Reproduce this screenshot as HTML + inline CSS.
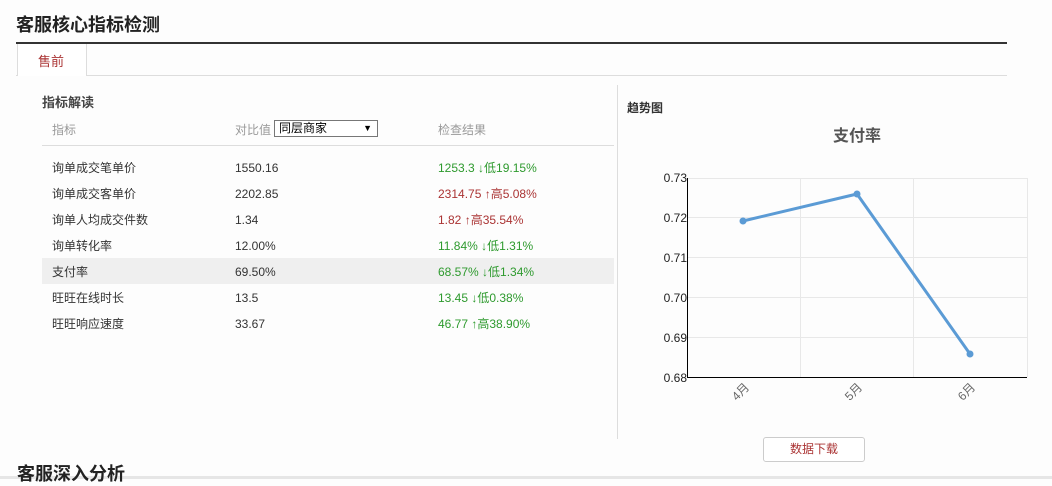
<!DOCTYPE html>
<html><head><meta charset="utf-8"><style>
*{margin:0;padding:0;box-sizing:border-box}
body{width:1052px;height:479px;overflow:hidden;background:#fdfdfd;font-family:"Liberation Sans","Noto Sans CJK SC",sans-serif;position:relative;color:#333}
.a{position:absolute;white-space:nowrap}
.h1{font-size:18px;font-weight:bold;color:#222}
.row{position:absolute;left:42px;width:572px;height:26px;font-size:12px;line-height:26px;color:#333}
.row span{position:absolute;top:1px}
.g{color:#2e9a2e}.r{color:#a33}
</style></head><body>
<div class="a" style="left:0;top:476px;width:1052px;height:3px;background:#e6e6e6"></div>
<div class="a h1" style="left:16px;top:11px">客服核心指标检测</div>
<div class="a" style="left:16px;top:42px;width:991px;height:2px;background:#333"></div>
<div class="a" style="left:16px;top:75px;width:991px;height:1px;background:#ddd"></div>
<div class="a" style="left:17px;top:44px;width:70px;height:32px;background:#fff;border:1px solid #ddd;border-top:none;border-bottom:none"></div>
<div class="a" style="left:38px;top:51px;font-size:13px;color:#a33">售前</div>
<div class="a" style="left:42px;top:92px;font-size:13px;font-weight:bold;color:#444">指标解读</div>
<div class="a" style="left:52px;top:121px;font-size:12px;color:#999">指标</div>
<div class="a" style="left:235px;top:121px;font-size:12px;color:#999">对比值</div>
<div class="a" style="left:274px;top:120px;width:104px;height:17px;border:1px solid #777;background:#fff;font-size:12px;line-height:15px;padding-left:4px;color:#000">同层商家<span style="position:absolute;right:5px;font-size:9px">▼</span></div>
<div class="a" style="left:438px;top:121px;font-size:12px;color:#999">检查结果</div>
<div class="a" style="left:42px;top:145px;width:572px;height:1px;background:#ddd"></div>
<div class="row" style="top:154px"><span style="left:10px">询单成交笔单价</span><span style="left:193px">1550.16</span><span class="g" style="left:396px">1253.3 ↓低19.15%</span></div>
<div class="row" style="top:180px"><span style="left:10px">询单成交客单价</span><span style="left:193px">2202.85</span><span class="r" style="left:396px">2314.75 ↑高5.08%</span></div>
<div class="row" style="top:206px"><span style="left:10px">询单人均成交件数</span><span style="left:193px">1.34</span><span class="r" style="left:396px">1.82 ↑高35.54%</span></div>
<div class="row" style="top:232px"><span style="left:10px">询单转化率</span><span style="left:193px">12.00%</span><span class="g" style="left:396px">11.84% ↓低1.31%</span></div>
<div class="row" style="top:258px;background:#efefef"><span style="left:10px">支付率</span><span style="left:193px">69.50%</span><span class="g" style="left:396px">68.57% ↓低1.34%</span></div>
<div class="row" style="top:284px"><span style="left:10px">旺旺在线时长</span><span style="left:193px">13.5</span><span class="g" style="left:396px">13.45 ↓低0.38%</span></div>
<div class="row" style="top:310px"><span style="left:10px">旺旺响应速度</span><span style="left:193px">33.67</span><span class="g" style="left:396px">46.77 ↑高38.90%</span></div>
<div class="a" style="left:617px;top:85px;width:1px;height:354px;background:#ddd"></div>
<div class="a" style="left:627px;top:99px;font-size:12px;font-weight:bold;color:#333">趋势图</div>
<svg class="a" style="left:0;top:0" width="1052" height="479">
<text x="857" y="141" font-size="16" font-weight="bold" fill="#555" text-anchor="middle" font-family="Liberation Sans,Noto Sans CJK SC,sans-serif">支付率</text>
<g stroke="#e8e8e8" stroke-width="1">
<line x1="687" y1="178.5" x2="1027" y2="178.5"/><line x1="687" y1="217.5" x2="1027" y2="217.5"/><line x1="687" y1="257.5" x2="1027" y2="257.5"/><line x1="687" y1="297.5" x2="1027" y2="297.5"/><line x1="687" y1="337.5" x2="1027" y2="337.5"/>
<line x1="800.5" y1="178" x2="800.5" y2="377"/><line x1="913.5" y1="178" x2="913.5" y2="377"/><line x1="1027.5" y1="178" x2="1027.5" y2="377"/>
</g>
<line x1="687.5" y1="178" x2="687.5" y2="377" stroke="#000"/>
<line x1="687" y1="377.5" x2="1027" y2="377.5" stroke="#000"/>
<g font-size="12" fill="#222" text-anchor="end" font-family="Liberation Sans,sans-serif">
<text x="687" y="182">0.73</text><text x="687" y="222">0.72</text><text x="687" y="262">0.71</text><text x="687" y="302">0.70</text><text x="687" y="342">0.69</text><text x="687" y="382">0.68</text></g>
<polyline points="743,221 857,194 970,354" fill="none" stroke="#5b9bd5" stroke-width="3"/>
<g fill="#5b9bd5"><circle cx="743" cy="221" r="3.5"/><circle cx="857" cy="194" r="3.5"/><circle cx="970" cy="354" r="3.5"/></g>
<g font-size="12" fill="#666" font-family="Liberation Sans,Noto Sans CJK SC,sans-serif" text-anchor="end">
<text transform="translate(750,388) rotate(-45)">4月</text>
<text transform="translate(863,388) rotate(-45)">5月</text>
<text transform="translate(976,388) rotate(-45)">6月</text></g>
</svg>
<div class="a" style="left:763px;top:437px;width:102px;height:25px;border:1px solid #ccc;border-radius:3px;background:#fff;font-size:12px;color:#a33;text-align:center;line-height:23px">数据下载</div>
<div class="a h1" style="left:17px;top:460px">客服深入分析</div>
</body></html>
